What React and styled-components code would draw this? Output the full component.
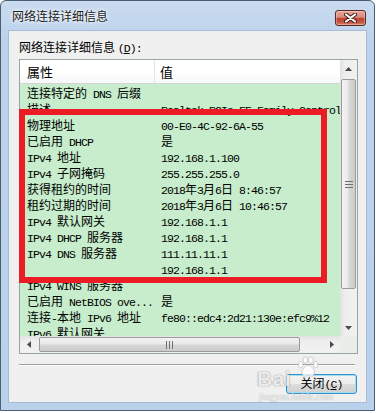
import React from "react";
import styled, { createGlobalStyle } from "styled-components";

const GlobalStyle = createGlobalStyle`
  html, body {
    margin: 0;
    padding: 0;
    background: #ffffff;
  }
  body {
    font-family: "Noto Sans CJK SC", "Liberation Sans", sans-serif;
    font-size: 12px;
    color: #000;
  }
`;

const Window = styled.div`
  position: relative;
  width: 375px;
  height: 411px;
  box-sizing: border-box;
  border: 1px solid #4a5d73;
  border-radius: 6px 6px 0 0;
  background: linear-gradient(to bottom, #c9dbef 0%, #bcd2ec 10%, #bad1ec 100%);
  padding: 0 7px 7px;
  display: flex;
  flex-direction: column;
`;

const TitleBar = styled.div`
  height: 29px;
  margin: 0 -7px;
  padding: 0 8px 0 11px;
  display: flex;
  align-items: flex-start;
  justify-content: space-between;
  flex-shrink: 0;
`;

const Title = styled.div`
  margin-top: 8px;
  line-height: 14px;
  font-size: 12px;
  color: #1c1c1c;
  text-shadow: 0 0 5px #ffffff, 0 0 3px #ffffff;
`;

const CloseBtn = styled.div`
  width: 31px;
  height: 16px;
  margin-top: 9px;
  box-sizing: border-box;
  border: 1px solid #5c2a24;
  border-radius: 3px;
  background: linear-gradient(to bottom, #e7a597 0%, #d98a7b 45%, #c2442f 52%, #c6513c 78%, #d8866a 100%);
  box-shadow: inset 0 0 0 1px rgba(255, 255, 255, 0.3);
  display: flex;
  align-items: center;
  justify-content: center;
`;

const Client = styled.div`
  position: relative;
  flex: 1;
  box-sizing: border-box;
  border: 1px solid #a7bbd4;
  background: #f0f0f0;
  padding: 9px 8px 0 10px;
  display: flex;
  flex-direction: column;
`;

const Label = styled.div`
  line-height: 14px;
  margin-bottom: 3px;
  white-space: nowrap;
`;

const ListBox = styled.div`
  position: relative;
  width: 339px;
  height: 295px;
  box-sizing: border-box;
  border: 1px solid #98a59a;
  background: #c7edcc;
  display: grid;
  grid-template-columns: 1fr 17px;
  grid-template-rows: 1fr 17px;
`;

const ListMain = styled.div`
  grid-row: 1;
  grid-column: 1;
  overflow: hidden;
`;

const Header = styled.div`
  height: 24px;
  box-sizing: border-box;
  display: grid;
  grid-template-columns: 135px 1fr;
  background: linear-gradient(to bottom, #ffffff 0%, #ffffff 55%, #f6f7f9 100%);
  border-bottom: 1px solid #d5d5d5;
`;

const HeaderCell = styled.div`
  line-height: 23px;
  padding-left: ${(p) => (p.$first ? "7px" : "5px")};
  border-right: ${(p) => (p.$first ? "1px solid #e2e4e8" : "none")};
  font-size: 13px;
`;

const Rows = styled.div`
  padding-top: 1px;
`;

const Row = styled.div`
  display: grid;
  grid-template-columns: 135px 1fr;
  height: 16px;
  line-height: 16px;
  white-space: nowrap;
`;

const Cell = styled.div`
  overflow: hidden;
  padding-left: ${(p) => (p.$first ? "7px" : "6px")};
`;

const Latin = styled.span`
  font-family: "Liberation Mono", monospace;
  font-size: 11.5px;
  letter-spacing: -0.9px;
`;

const VScroll = styled.div`
  grid-row: 1;
  grid-column: 2;
  display: flex;
  flex-direction: column;
  background: linear-gradient(to right, #e2e2e2 0%, #eeeeee 30%, #f1f1f1 100%);
`;

const HScroll = styled.div`
  grid-row: 2;
  grid-column: 1;
  display: flex;
  background: linear-gradient(to bottom, #e2e2e2 0%, #eeeeee 30%, #f1f1f1 100%);
`;

const Corner = styled.div`
  grid-row: 2;
  grid-column: 2;
  background: #e9eee9;
`;

const ArrowBtn = styled.div`
  width: 17px;
  height: 17px;
  flex-shrink: 0;
  display: flex;
  align-items: center;
  justify-content: center;
`;

const Spacer = styled.div`
  flex: 1;
`;

const VThumb = styled.div`
  margin: 2px 1px 0;
  height: 210px;
  box-sizing: border-box;
  border: 1px solid #9b9b9b;
  border-radius: 2px;
  background: linear-gradient(to right, #f4f4f4 0%, #e8e8e8 45%, #d6d6d6 55%, #cccccc 100%);
  display: flex;
  align-items: center;
  justify-content: center;
`;

const HThumb = styled.div`
  margin: 1px 0 1px 2px;
  width: 261px;
  box-sizing: border-box;
  border: 1px solid #9b9b9b;
  border-radius: 2px;
  background: linear-gradient(to bottom, #f4f4f4 0%, #e8e8e8 45%, #d6d6d6 55%, #cccccc 100%);
  display: flex;
  align-items: center;
  justify-content: center;
`;

const Highlight = styled.div`
  position: absolute;
  left: -1px;
  top: 49px;
  width: 308px;
  height: 174px;
  box-sizing: border-box;
  border: 6px solid #ec1c24;
  pointer-events: none;
`;

const Separator = styled.div`
  width: 336px;
  margin-top: 10px;
  border-top: 1px solid #a0a0a0;
  border-bottom: 1px solid #ffffff;
`;

const PushButton = styled.button`
  align-self: flex-end;
  width: 71px;
  height: 20px;
  margin: 8px 1px 0 0;
  padding: 0;
  box-sizing: border-box;
  border: 1px solid #3a8fc4;
  border-radius: 3px;
  background: linear-gradient(to bottom, #f3f3f3 0%, #ececec 50%, #dddddd 51%, #d0d0d0 100%);
  box-shadow: inset 0 0 0 1px #9fe0f8;
  font-family: "Noto Sans CJK SC", sans-serif;
  font-size: 12px;
  line-height: 16px;
  color: #000;
`;

const Watermark = styled.div`
  position: absolute;
  left: 248px;
  top: 324px;
  width: 100px;
  height: 50px;
  pointer-events: none;
  color: rgba(255, 255, 255, 0.85);
`;

const WmBrand = styled.div`
  display: flex;
  align-items: flex-end;
  gap: 3px;
  height: 34px;
`;

const WmBai = styled.span`
  font-family: "Liberation Sans", sans-serif;
  font-weight: bold;
  font-size: 21px;
  line-height: 20px;
  letter-spacing: 0.5px;
  text-shadow: 0 0 1px rgba(80, 80, 80, 0.6), 0 0 2px rgba(80, 80, 80, 0.3);
`;

const WmPaw = styled.svg`
  align-self: flex-start;
  margin-top: 1px;
`;

const WmUrl = styled.div`
  margin-top: 3px;
  margin-left: 2px;
  font-family: "Liberation Serif", serif;
  font-size: 10px;
  line-height: 10px;
  text-shadow: 0 0 1px rgba(80, 80, 80, 0.6);
`;

function Mixed({ text }) {
  const parts = text.split(/([\x20-\x7e]+)/).filter(Boolean);
  return parts.map((p, i) =>
    /^[\x20-\x7e]+$/.test(p) ? <Latin key={i}>{p}</Latin> : <React.Fragment key={i}>{p}</React.Fragment>
  );
}

const Triangle = ({ dir }) => {
  const pts = {
    up: "0,4 3.5,0 7,4",
    down: "0,0 7,0 3.5,4",
    left: "4,0 4,7 0,3.5",
    right: "0,0 4,3.5 0,7",
  }[dir];
  const vertical = dir === "up" || dir === "down";
  return (
    <svg width={vertical ? 7 : 4} height={vertical ? 4 : 7}>
      <polygon points={pts} fill="#4a4a4a" />
    </svg>
  );
};

const Grip = ({ vertical }) =>
  vertical ? (
    <svg width="8" height="7">
      <path d="M0 0.5H8M0 3.5H8M0 6.5H8" stroke="#6e6e6e" strokeWidth="1" />
    </svg>
  ) : (
    <svg width="7" height="8">
      <path d="M0.5 0V8M3.5 0V8M6.5 0V8" stroke="#6e6e6e" strokeWidth="1" />
    </svg>
  );

const rows = [
  ["连接特定的 DNS 后缀", ""],
  ["描述", "Realtek PCIe FE Family Controller"],
  ["物理地址", "00-E0-4C-92-6A-55"],
  ["已启用 DHCP", "是"],
  ["IPv4 地址", "192.168.1.100"],
  ["IPv4 子网掩码", "255.255.255.0"],
  ["获得租约的时间", "2018年3月6日 8:46:57"],
  ["租约过期的时间", "2018年3月6日 10:46:57"],
  ["IPv4 默认网关", "192.168.1.1"],
  ["IPv4 DHCP 服务器", "192.168.1.1"],
  ["IPv4 DNS 服务器", "111.11.11.1"],
  ["", "192.168.1.1"],
  ["IPv4 WINS 服务器", ""],
  ["已启用 NetBIOS ove...", "是"],
  ["连接-本地 IPv6 地址", "fe80::edc4:2d21:130e:efc9%12"],
  ["IPv6 默认网关", ""],
];

export default function App() {
  return (
    <>
      <GlobalStyle />
      <Window>
        <TitleBar>
          <Title>网络连接详细信息</Title>
          <CloseBtn>
            <svg width="13" height="10" viewBox="0 0 13 10">
              <path d="M2 1.5L11 8.5M11 1.5L2 8.5" stroke="#3b1a16" strokeWidth="4" strokeLinecap="round" />
              <path d="M2 1.5L11 8.5M11 1.5L2 8.5" stroke="#ffffff" strokeWidth="2.2" strokeLinecap="round" />
            </svg>
          </CloseBtn>
        </TitleBar>
        <Client>
          <Label>
            网络连接详细信息 <Latin>(<u>D</u>):</Latin>
          </Label>
          <ListBox>
            <ListMain>
              <Header>
                <HeaderCell $first>属性</HeaderCell>
                <HeaderCell>值</HeaderCell>
              </Header>
              <Rows>
                {rows.map(([k, v], i) => (
                  <Row key={i}>
                    <Cell $first>
                      <Mixed text={k} />
                    </Cell>
                    <Cell>
                      <Mixed text={v} />
                    </Cell>
                  </Row>
                ))}
              </Rows>
            </ListMain>
            <VScroll>
              <ArrowBtn>
                <Triangle dir="up" />
              </ArrowBtn>
              <VThumb>
                <Grip vertical />
              </VThumb>
              <Spacer />
              <ArrowBtn>
                <Triangle dir="down" />
              </ArrowBtn>
            </VScroll>
            <HScroll>
              <ArrowBtn>
                <Triangle dir="left" />
              </ArrowBtn>
              <HThumb>
                <Grip />
              </HThumb>
              <Spacer />
              <ArrowBtn>
                <Triangle dir="right" />
              </ArrowBtn>
            </HScroll>
            <Corner />
            <Highlight />
          </ListBox>
          <Separator />
          <PushButton>
            关闭<Latin>(<u>C</u>)</Latin>
          </PushButton>
          <Watermark>
            <WmBrand>
              <WmBai>Bai</WmBai>
              <WmPaw width="26" height="22" viewBox="0 0 30 28">
                <g fill="rgba(255,255,255,0.8)" stroke="rgba(90,90,90,0.4)" strokeWidth="0.8">
                  <ellipse cx="7" cy="11" rx="3" ry="4" />
                  <ellipse cx="13" cy="5" rx="3" ry="4" />
                  <ellipse cx="20" cy="5" rx="3" ry="4" />
                  <ellipse cx="26" cy="11" rx="3" ry="4" />
                  <path d="M16.5 12 C11 12 7 20 9 24 C11 27 14 25 16.5 25 C19 25 22 27 24 24 C26 20 22 12 16.5 12Z" />
                </g>
              </WmPaw>
            </WmBrand>
            <WmUrl>jingyan.baidu.com</WmUrl>
          </Watermark>
        </Client>
      </Window>
    </>
  );
}
